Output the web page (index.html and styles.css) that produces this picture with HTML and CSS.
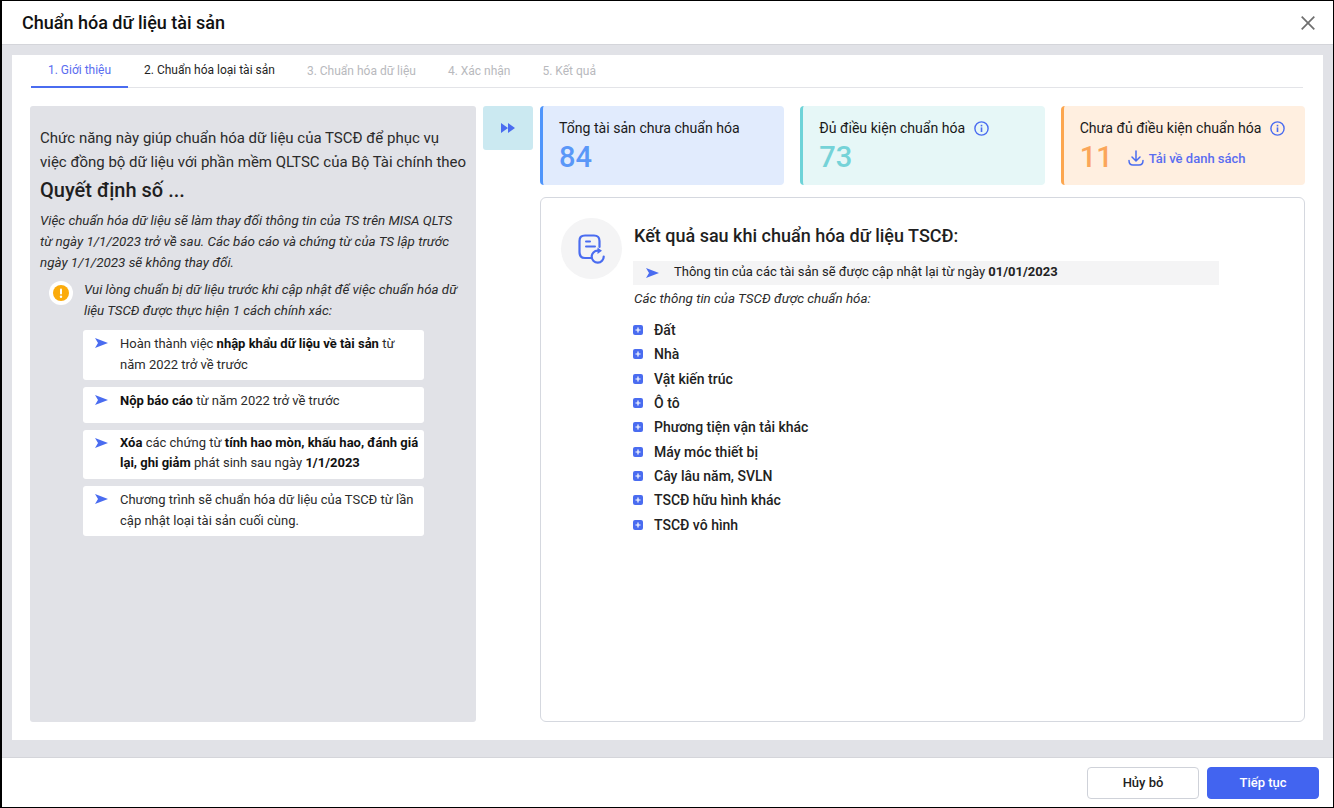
FILE: index.html
```html
<!DOCTYPE html>
<html lang="vi">
<head>
<meta charset="utf-8">
<title>Chuẩn hóa dữ liệu tài sản</title>
<link rel="stylesheet" href="styles.css">
</head>
<body>
<svg class="defs" width="0" height="0" aria-hidden="true">
  <symbol id="dart" viewBox="0 0 13 10"><path d="M0 0 L13 5 L0 10 L3 5 Z" fill="#4a6cf0"/></symbol>
  <symbol id="info" viewBox="0 0 15 15"><circle cx="7.500" cy="7.500" r="6.600" fill="none" stroke="#4a6cf0" stroke-width="1.400"/><rect x="6.700" y="6.400" width="1.600" height="4.600" fill="#4a6cf0"/><rect x="6.700" y="3.800" width="1.600" height="1.600" fill="#4a6cf0"/></symbol>
  <symbol id="plus" viewBox="0 0 10 10"><rect width="10" height="10" rx="2" fill="#4a6cf0"/><path d="M2.500 5 H7.500 M5 2.500 V7.500" stroke="#fff" stroke-width="1.200"/></symbol>
</svg>
<div class="modal">
  <header class="head">
    <h1 class="title">Chuẩn hóa dữ liệu tài sản</h1>
    <svg class="close" viewBox="0 0 14 14" width="14" height="14"><path d="M0.700 0.700 L13.300 13.300 M13.300 0.700 L0.700 13.300" stroke="#6f6f6f" stroke-width="1.700" fill="none"/></svg>
  </header>
  <main class="body">
    <div class="sheet">
      <nav class="tabs">
        <span class="tab active">1. Giới thiệu</span>
        <span class="tab done">2. Chuẩn hóa loại tài sản</span>
        <span class="tab off">3. Chuẩn hóa dữ liệu</span>
        <span class="tab off">4. Xác nhận</span>
        <span class="tab off">5. Kết quả</span>
      </nav>
      <div class="cols">
        <section class="intro">
          <p class="lead">Chức năng này giúp chuẩn hóa dữ liệu của TSCĐ để phục vụ việc đồng bộ dữ liệu với phần mềm QLTSC của Bộ Tài chính theo</p>
          <p class="decision">Quyết định số ...</p>
          <p class="note">Việc chuẩn hóa dữ liệu sẽ làm thay đổi thông tin của TS trên MISA QLTS từ ngày 1/1/2023 trở về sau. Các báo cáo và chứng từ của TS lập trước ngày 1/1/2023 sẽ không thay đổi.</p>
          <div class="warn">
            <span class="warn-ring"><svg viewBox="0 0 16 16" width="16" height="16"><circle cx="8" cy="8" r="8" fill="#fbab0b"/><rect x="7" y="3.400" width="2" height="6" rx="1" fill="#fff"/><circle cx="8" cy="11.700" r="1.200" fill="#fff"/></svg></span>
            <p class="warn-text">Vui lòng chuẩn bị dữ liệu trước khi cập nhật để việc chuẩn hóa dữ liệu TSCĐ được thực hiện 1 cách chính xác:</p>
          </div>
          <ul class="steps">
            <li class="step"><svg class="dart"><use href="#dart"/></svg><span>Hoàn thành việc <b>nhập khẩu dữ liệu về tài sản</b> từ năm 2022 trở về trước</span></li>
            <li class="step step-short"><svg class="dart"><use href="#dart"/></svg><span><b>Nộp báo cáo</b> từ năm 2022 trở về trước</span></li>
            <li class="step step-tight"><svg class="dart"><use href="#dart"/></svg><span><b>Xóa</b> các chứng từ <b>tính hao mòn, khấu hao, đánh giá lại, ghi giảm</b> phát sinh sau ngày <b>1/1/2023</b></span></li>
            <li class="step"><svg class="dart"><use href="#dart"/></svg><span>Chương trình sẽ chuẩn hóa dữ liệu của TSCĐ từ lần cập nhật loại tài sản cuối cùng.</span></li>
          </ul>
        </section>
        <div class="toggle"><svg viewBox="0 0 14 10" width="14" height="10"><path d="M0 0 L7 5 L0 10 Z M7 0 L14 5 L7 10 Z" fill="#4a6cf0"/></svg></div>
        <section class="right">
          <div class="cards">
            <div class="card card-blue">
              <div class="card-label">Tổng tài sản chưa chuẩn hóa</div>
              <div class="card-row"><span class="num">84</span></div>
            </div>
            <div class="card card-teal">
              <div class="card-label">Đủ điều kiện chuẩn hóa <svg class="info"><use href="#info"/></svg></div>
              <div class="card-row"><span class="num">73</span></div>
            </div>
            <div class="card card-orange">
              <div class="card-label">Chưa đủ điều kiện chuẩn hóa <svg class="info"><use href="#info"/></svg></div>
              <div class="card-row"><span class="num">11</span>
                <a class="dl"><svg viewBox="0 0 16 16" width="16" height="16"><path d="M8 1 V10.500 M4 7 L8 11 L12 7 M1 10.500 C1 14 3 15 5 15 H11 C13 15 15 14 15 10.500" fill="none" stroke="#4a6cf0" stroke-width="1.500" stroke-linecap="round" stroke-linejoin="round"/></svg>Tải về danh sách</a>
              </div>
            </div>
          </div>
          <div class="result">
            <div class="badge"><svg viewBox="0 0 28 32" width="28" height="32"><path d="M13 25 H7 C3 25 1.500 23 1.500 19 V8 C1.500 4 3 2.500 7 2.500 H16 C20 2.500 21.500 4 21.500 8 V14" fill="none" stroke="#4a6cf0" stroke-width="2.200" stroke-linecap="round"/><path d="M8 8.500 H12 M8 13.500 H17" stroke="#4a6cf0" stroke-width="2" stroke-linecap="round"/><path d="M25.700 23.500 A6 6 0 1 1 19.700 17.700" fill="none" stroke="#4a6cf0" stroke-width="2.200" stroke-linecap="round"/><path d="M19.500 14.500 L24 17.700 L19.500 21 Z" fill="#4a6cf0"/></svg></div>
            <div class="result-main">
              <h2 class="result-title">Kết quả sau khi chuẩn hóa dữ liệu TSCĐ:</h2>
              <div class="banner"><svg class="dart"><use href="#dart"/></svg><span>Thông tin của các tài sản sẽ được cập nhật lại từ ngày <b>01/01/2023</b></span></div>
              <p class="sub">Các thông tin của TSCĐ được chuẩn hóa:</p>
              <ul class="groups">
                <li class="group"><svg class="plus"><use href="#plus"/></svg>Đất</li>
                <li class="group"><svg class="plus"><use href="#plus"/></svg>Nhà</li>
                <li class="group"><svg class="plus"><use href="#plus"/></svg>Vật kiến trúc</li>
                <li class="group"><svg class="plus"><use href="#plus"/></svg>Ô tô</li>
                <li class="group"><svg class="plus"><use href="#plus"/></svg>Phương tiện vận tải khác</li>
                <li class="group"><svg class="plus"><use href="#plus"/></svg>Máy móc thiết bị</li>
                <li class="group"><svg class="plus"><use href="#plus"/></svg>Cây lâu năm, SVLN</li>
                <li class="group"><svg class="plus"><use href="#plus"/></svg>TSCĐ hữu hình khác</li>
                <li class="group"><svg class="plus"><use href="#plus"/></svg>TSCĐ vô hình</li>
              </ul>
            </div>
          </div>
        </section>
      </div>
    </div>
  </main>
  <footer class="foot">
    <button class="btn btn-ghost">Hủy bỏ</button>
    <button class="btn btn-primary">Tiếp tục</button>
  </footer>
</div>
</body>
</html>
```

FILE: styles.css
```css
* { box-sizing: border-box; }
html, body { margin: 0; height: 100%; }
body {
  background: #000;
  font-family: Roboto, "Noto Sans", sans-serif;
  color: #1f1f1f;
  overflow: hidden;
}
.defs { position: absolute; }
p, h1, h2, ul { margin: 0; padding: 0; }
ul { list-style: none; }

.modal {
  display: flex;
  flex-direction: column;
  width: 1331px;
  height: 806px;
  margin: 1px 0 0 2px;
  background: #fff;
}
.head {
  flex: none;
  height: 44px;
  display: flex;
  align-items: center;
  justify-content: space-between;
  padding: 0 18px 0 20px;
  border-bottom: 1px solid #d4d5da;
}
.title { font-size: 18px; font-weight: 500; color: #111; }
.close { display: block; }

.body {
  flex: 1;
  min-height: 0;
  background: #e1e2e7;
  padding: 10px 10px 17px 10px;
}
.sheet {
  height: 100%;
  background: #fff;
  padding: 0 18px;
  display: flex;
  flex-direction: column;
}
.tabs {
  flex: none;
  height: 33px;
  margin: 0 2px 0 1px;
  display: flex;
  border-bottom: 1px solid #e3e4e8;
  font-size: 12px;
}
.tab { padding-top: 8px; }
.tab.active {
  width: 97px;
  text-align: center;
  color: #5a6df0;
  border-bottom: 2px solid #4a6cf0;
  height: 33px;
}
.tab.done { margin-left: 16px; color: #1f1f1f; }
.tab.off { margin-left: 32px; color: #b8b9bd; padding-top: 9px; }

.cols {
  flex: 1;
  min-height: 0;
  display: flex;
  margin-top: 18px;
  margin-bottom: 18px;
}
.intro {
  flex: none;
  width: 446px;
  background: #e1e2e7;
  border-radius: 3px;
  padding: 20px 8px 0 10px;
}
.lead { font-size: 15px; line-height: 24px; color: #2b2b2b; }
.decision { font-size: 20px; font-weight: 500; line-height: 30px; color: #1f1f1f; margin-top: 1px; }
.note { font-size: 13.4px; font-style: italic; line-height: 21px; margin-top: 5px; color: #2b2b2b; width: 416px; }
.warn { display: flex; margin-top: 6px; padding-left: 9px; }
.warn-ring {
  flex: none;
  width: 24px;
  height: 24px;
  border-radius: 50%;
  background: #fff;
  display: flex;
  align-items: center;
  justify-content: center;
  margin-top: 2px;
}
.warn-text { font-size: 13.3px; font-style: italic; line-height: 21px; margin-left: 11px; color: #2b2b2b; width: 384px; }
.steps { margin: 9px 0 0 43px; width: 341px; display: flex; flex-direction: column; gap: 7px; }
.step {
  display: flex;
  background: #fff;
  border-radius: 3px;
  padding: 3px 4px 5px 12px;
  font-size: 13px;
  line-height: 21px;
  height: 50px;
  color: #2b2b2b;
}
.step-short { height: 36px; }
.step-tight { height: 49px; line-height: 20px; }
.step b { font-weight: 700; color: #111; }
.dart { flex: none; width: 13px; height: 10px; margin: 5px 12px 0 0; }

.toggle {
  flex: none;
  width: 50px;
  height: 44px;
  margin: 0 7px;
  background: #cbe9f1;
  border-radius: 3px;
  display: flex;
  align-items: center;
  justify-content: center;
}
.right { flex: 1; min-width: 0; display: flex; flex-direction: column; }
.cards { flex: none; display: flex; gap: 16px; }
.card {
  flex: 1;
  height: 79px;
  border-left: 3px solid;
  border-radius: 4px;
  padding: 12px 16px;
}
.card-blue { background: #e1ebfd; border-color: #4f95fb; }
.card-teal { background: #e6f7f7; border-color: #6ed3d8; }
.card-orange { background: #ffefe0; border-color: #fca64f; }
.card-label { font-size: 14.1px; line-height: 20px; color: #1a1a1a; display: flex; align-items: center; justify-content: flex-start; white-space: nowrap; }
.info { width: 15px; height: 15px; margin-left: 9px; }
.card-row { display: flex; align-items: center; height: 34px; margin-top: 2px; }
.num { font-size: 29px; font-weight: 500; line-height: 34px; }
.card-blue .num { color: #5a97f8; }
.card-teal .num { color: #75d3d8; }
.card-orange .num { color: #fba65a; }
.dl { display: flex; align-items: center; margin-left: 15px; margin-top: 2px; font-size: 13px; font-weight: 500; color: #5a6df0; }
.dl svg { margin-right: 5px; }

.result {
  flex: 1;
  min-height: 0;
  margin-top: 12px;
  border: 1px solid #d5d8df;
  border-radius: 6px;
  padding: 20px;
  display: flex;
}
.badge {
  flex: none;
  width: 61px;
  height: 61px;
  border-radius: 50%;
  background: #f4f4f5;
  display: flex;
  align-items: center;
  justify-content: center;
}
.result-main { margin-left: 11px; }
.result-title { font-size: 18px; font-weight: 500; line-height: 24px; color: #1f1f1f; margin-top: 6px; padding-left: 1px; }
.banner {
  width: 586px;
  height: 24px;
  margin-top: 13px;
  background: #f4f4f5;
  display: flex;
  align-items: center;
  padding: 0 0 3px 13px;
  font-size: 13px;
  color: #222;
}
.banner .dart { margin: 3px 15px 0 0; }
.banner b { font-weight: 700; }
.sub { font-size: 13.4px; font-style: italic; margin-top: 6px; padding-left: 1px; line-height: 15px; color: #2b2b2b; }
.groups { margin-top: 12px; }
.group { display: flex; align-items: center; height: 24.3px; font-size: 14px; font-weight: 500; color: #222; }
.plus { width: 10px; height: 10px; margin-right: 11px; }

.foot {
  flex: none;
  height: 50px;
  border-top: 1px solid #d4d5da;
  display: flex;
  justify-content: flex-end;
  align-items: center;
  gap: 8px;
  padding: 0 14px 0 0;
}
.btn {
  font-family: inherit;
  font-size: 13px;
  font-weight: 500;
  width: 112px;
  height: 32px;
  border-radius: 4px;
  padding: 0;
}
.btn-ghost { background: #fff; border: 1px solid #cfd2d9; color: #222; }
.btn-primary { background: #4264f0; border: 1px solid #4264f0; color: #fff; }
```
